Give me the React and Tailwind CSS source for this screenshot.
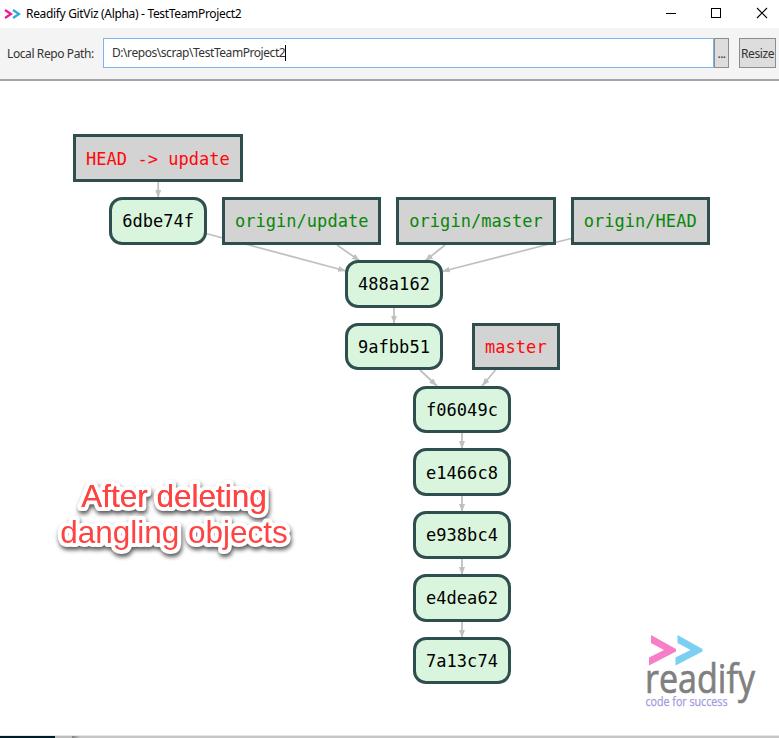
const nodes = [
  { label: 'HEAD -> update', kind: 'local', x: 73.2, y: 134.3, w: 169.6 },
  { label: '6dbe74f', kind: 'commit', x: 109.3, y: 197.1, w: 97.6 },
  { label: 'origin/update', kind: 'remote', x: 222, y: 197.1, w: 159.4 },
  { label: 'origin/master', kind: 'remote', x: 396.4, y: 197.1, w: 159.4 },
  { label: 'origin/HEAD', kind: 'remote', x: 570.8, y: 197.1, w: 138.8 },
  { label: '488a162', kind: 'commit', x: 345.2, y: 259.9, w: 97.6 },
  { label: '9afbb51', kind: 'commit', x: 345.2, y: 322.7, w: 97.6 },
  { label: 'master', kind: 'local', x: 472, y: 322.7, w: 87.7 },
  { label: 'f06049c', kind: 'commit', x: 413.2, y: 385.5, w: 97.6 },
  { label: 'e1466c8', kind: 'commit', x: 413.2, y: 448.3, w: 97.6 },
  { label: 'e938bc4', kind: 'commit', x: 413.2, y: 511.1, w: 97.6 },
  { label: 'e4dea62', kind: 'commit', x: 413.2, y: 573.9, w: 97.6 },
  { label: '7a13c74', kind: 'commit', x: 413.2, y: 636.7, w: 97.6 },
];

const kinds = {
  local: 'bg-[#d3d3d3] text-[#ff0808]',
  remote: 'bg-[#d3d3d3] text-[#0a860a]',
  commit: 'rounded-[13px] bg-[#daf5dd] text-black',
};

const edges = [
  [158.2, 182, 158.2, 198],
  [206, 233.5, 346, 271],
  [337, 245, 360, 261],
  [445, 245, 425, 261],
  [571, 238.5, 442, 271.5],
  [394, 308, 394, 323.5],
  [420, 370, 437, 386],
  [495.5, 370, 482, 386],
  [462, 433, 462, 449],
  [462, 496, 462, 512],
  [462, 559, 462, 575],
  [462, 622, 462, 638],
];

function Node({ node }) {
  return (
    <div
      className={`absolute flex h-[47.8px] items-center justify-center border-3 border-[#2f4f4f] pt-[2px] font-['DejaVu_Sans_Mono',monospace] text-[17px] leading-none tracking-[0.04px] whitespace-pre ${kinds[node.kind]}`}
      style={{ left: node.x, top: node.y - 81, width: node.w }}
    >
      {node.label}
    </div>
  );
}

function TitleBar() {
  return (
    <header className="flex h-7 shrink-0 items-center bg-white">
      <svg className="ml-[4px] h-[10px] w-[17px]" viewBox="0 0 17 10" fill="none" strokeWidth="2.2">
        <path d="M1 1l6 4-6 4" stroke="#ec1c96" />
        <path d="M9 1l6 4-6 4" stroke="#2fa9dc" />
      </svg>
      <h1 className="ml-[5px] pb-px text-[12px] tracking-[-0.33px] whitespace-nowrap text-black">
        Readify GitViz (Alpha) - TestTeamProject2
      </h1>
      <svg className="ml-auto h-[28px] w-[120px]" viewBox="659 0 120 28" fill="none" stroke="#000" shapeRendering="crispEdges">
        <path d="M666 13.5h10" />
        <path d="M711.5 8.500h9v9h-9z" />
        <path d="M757 8l10 10M767 8l-10 10" shapeRendering="auto" strokeWidth="1.1" />
      </svg>
    </header>
  );
}

function Toolbar() {
  return (
    <div className="flex h-[53px] shrink-0 items-start border-b-2 border-[#a6a6a6] bg-[#f4f4f4] pt-[10px] pl-[7px] text-[12px] text-[#333]">
      <label className="mt-[7px] w-[96px] leading-[18px] tracking-[-0.4px] whitespace-nowrap">Local Repo Path:</label>
      <div className="flex h-[30px] w-[611px] items-center border border-[#7eb4ea] bg-white pl-[8px]">
        <span className="pb-px tracking-[-0.44px] whitespace-nowrap">D:\repos\scrap\TestTeamProject2</span>
        <span className="h-[16px] w-px bg-black" />
      </div>
      <button className="h-[30px] w-[15px] border border-[#8d8d8d] bg-[#ddd] pt-[2px] text-center tracking-[-0.5px]">...</button>
      <button className="ml-[10px] flex h-[30px] w-[37px] items-center justify-center border border-[#8d8d8d] bg-[#ddd] pt-[2px] tracking-[-0.4px]">
        Resize
      </button>
    </div>
  );
}

function Logo() {
  return (
    <svg className="absolute top-[539px] left-[630px] h-[110px] w-[149px]" viewBox="630 620 149 110">
      <path d="M651 635l25 14v2.500l-27 14v-8l15-7.500-13-7z" fill="#f77fc8" />
      <path d="M677.500 635l25 14v2.500l-27 14v-8l15-7.500-13-7z" fill="#7bcff2" />
      <text x="645" y="692.500" fontFamily="'Open Sans', sans-serif" fontSize="40" fill="#808080" stroke="#808080" strokeWidth="0.7" textLength="110" lengthAdjust="spacingAndGlyphs">
        readify
      </text>
      <text x="645.500" y="705.500" fontFamily="'Open Sans', sans-serif" fontSize="12" fill="#a19bdc" stroke="#a19bdc" strokeWidth="0.25" textLength="82" lengthAdjust="spacingAndGlyphs">
        code for success
      </text>
    </svg>
  );
}

function Caption() {
  return (
    <svg
      className="absolute top-[389px] left-[40px] h-[100px] w-[270px] drop-shadow-[1px_3px_2px_rgba(0,0,0,0.65)]"
      viewBox="40 470 270 100"
      fontFamily="'Liberation Sans', Arial, sans-serif"
      fontSize="31.5"
      textAnchor="middle"
      fill="#ff4343"
      stroke="#fff"
      strokeWidth="8"
      strokeLinejoin="round"
      paintOrder="stroke"
    >
      <text x="174" y="507">After deleting</text>
      <text x="174" y="543">dangling objects</text>
      <text x="174" y="507" stroke="none" aria-hidden="true">After deleting</text>
    </svg>
  );
}

export default function App() {
  return (
    <div className="flex h-[738px] w-[779px] flex-col overflow-hidden bg-white font-['Noto_Sans','Open_Sans',sans-serif]">
      <TitleBar />
      <Toolbar />
      <main className="relative h-[654px] shrink-0">
        <svg className="absolute inset-0 h-[654px] w-[779px]" viewBox="0 81 779 654">
          <defs>
            <marker id="arrow" viewBox="0 0 8 6" refX="8" refY="3" markerWidth="8" markerHeight="6" markerUnits="userSpaceOnUse" orient="auto">
              <path d="M0 0l8 3-8 3z" fill="#c0c0c0" />
            </marker>
          </defs>
          {edges.map(([x1, y1, x2, y2], i) => (
            <line key={i} x1={x1} y1={y1} x2={x2} y2={y2} stroke="#c0c0c0" strokeWidth="1.8" markerEnd="url(#arrow)" />
          ))}
        </svg>
        {nodes.map((node) => (
          <Node key={node.label} node={node} />
        ))}
        <Caption />
        <Logo />
      </main>
      <footer className="flex h-[3px] shrink-0 border-t border-[#e6e6e6] bg-[#c6c6c6]">
        <div className="w-[55px] bg-[#001c28]" />
        <div className="w-[17px] bg-[#bdbdbd]" />
        <div className="w-[8px] bg-linear-to-r from-[#808080] to-[#c6c6c6]" />
      </footer>
    </div>
  );
}
